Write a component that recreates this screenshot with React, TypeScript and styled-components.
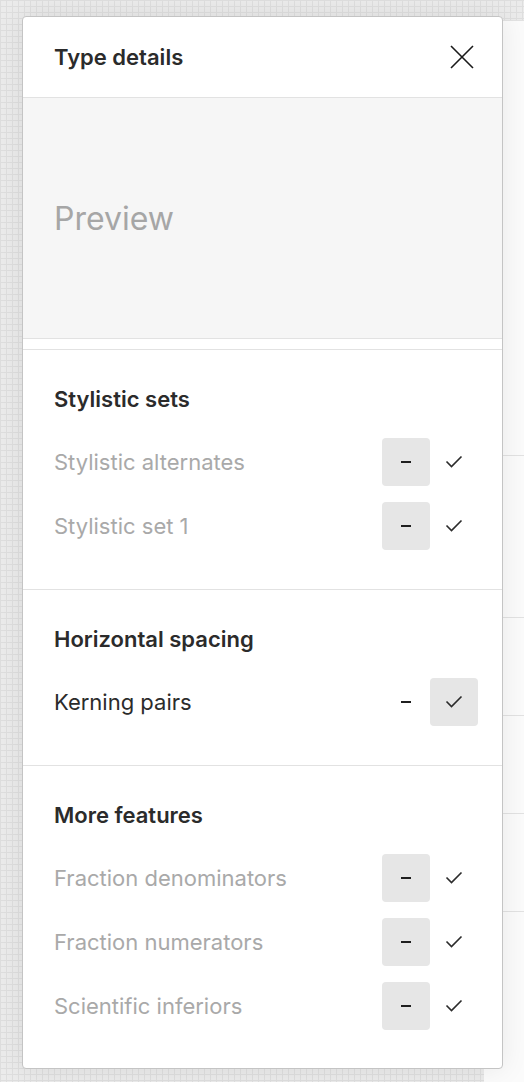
import React from 'react';
import styled, { createGlobalStyle } from 'styled-components';

const GlobalStyle = createGlobalStyle`
  html, body {
    margin: 0;
    padding: 0;
  }
  body {
    font-family: Inter, "Noto Sans", sans-serif;
    color: #2b2b2b;
  }
  * {
    box-sizing: border-box;
  }
`;

const Page = styled.div`
  position: relative;
  width: 524px;
  height: 1082px;
  overflow: hidden;
  display: flex;
  background-color: #ebebeb;
  background-image:
    linear-gradient(#dedede 1px, transparent 1px),
    linear-gradient(90deg, #dedede 1px, transparent 1px);
  background-size: 6px 6px;
`;

const Canvas = styled.div`
  flex: 1;
`;

const Sidebar = styled.div`
  width: 40px;
  margin-top: 20px;
  background: #fbfbfb;
  border-top: 1px solid #e2e2e2;
  display: flex;
  flex-direction: column;
`;

const SidebarRow = styled.div<{ $h: number }>`
  height: ${(p) => p.$h}px;
  flex-shrink: 0;
  border-bottom: 1px solid #e2e2e2;
`;

const Panel = styled.div`
  position: absolute;
  left: 22px;
  top: 16px;
  width: 481px;
  height: 1053px;
  background: #ffffff;
  border: 1px solid #c4c4c4;
  border-radius: 4px;
  box-shadow: 0 0 28px rgba(0, 0, 0, 0.08);
  display: flex;
  flex-direction: column;
  overflow: hidden;
`;

const Header = styled.div`
  height: 81px;
  flex-shrink: 0;
  padding: 0 24px 0 31px;
  border-bottom: 1px solid #e2e2e2;
  display: flex;
  align-items: center;
  justify-content: space-between;
`;

const Title = styled.h2`
  margin: 0;
  font-size: 22px;
  font-weight: 600;
  line-height: 26px;
  color: #2b2b2b;
`;

const CloseButton = styled.button`
  width: 32px;
  height: 32px;
  padding: 0;
  border: none;
  background: transparent;
  display: flex;
  align-items: center;
  justify-content: center;
  color: #1a1a1a;
`;

const Preview = styled.div`
  height: 241px;
  flex-shrink: 0;
  margin-bottom: 10px;
  padding: 0 31px;
  background: #f6f6f6;
  border-bottom: 1px solid #e2e2e2;
  display: flex;
  align-items: center;
  font-size: 32px;
  color: #a6a6a6;
`;

const Section = styled.div`
  padding: 36px 24px 39px 31px;
  border-top: 1px solid #e2e2e2;
  display: flex;
  flex-direction: column;
  gap: 16px;
`;

const SectionTitle = styled.h3`
  margin: 0 0 10px;
  font-size: 22px;
  font-weight: 600;
  line-height: 26px;
  color: #2b2b2b;
`;

const Row = styled.div`
  height: 48px;
  display: flex;
  align-items: center;
  justify-content: space-between;
`;

const Label = styled.span<{ $muted?: boolean }>`
  font-size: 22px;
  color: ${(p) => (p.$muted ? '#a9a9a9' : '#2b2b2b')};
`;

const Toggle = styled.div`
  display: flex;
`;

const Option = styled.div<{ $active?: boolean }>`
  width: 48px;
  height: 48px;
  border-radius: 4px;
  background: ${(p) => (p.$active ? '#e6e6e6' : 'transparent')};
  display: flex;
  align-items: center;
  justify-content: center;
  color: #1f1f1f;
`;

const Dash = () => (
  <svg width="12" height="12" viewBox="0 0 12 12">
    <rect x="1" y="5" width="10" height="2" fill="#1f1f1f" />
  </svg>
);

const Check = () => (
  <svg width="18" height="14" viewBox="0 0 18 14">
    <path d="M1.5 6.5 L6.5 11.5 L16.5 1.5" fill="none" stroke="#2b2b2b" strokeWidth="1.6" />
  </svg>
);

const Close = () => (
  <svg width="24" height="24" viewBox="0 0 24 24">
    <path d="M1 1 L23 23 M23 1 L1 23" fill="none" stroke="#1a1a1a" strokeWidth="1.6" />
  </svg>
);

interface Feature {
  name: string;
  on: boolean;
}

const sections: { title: string; features: Feature[] }[] = [
  {
    title: 'Stylistic sets',
    features: [
      { name: 'Stylistic alternates', on: false },
      { name: 'Stylistic set 1', on: false },
    ],
  },
  {
    title: 'Horizontal spacing',
    features: [{ name: 'Kerning pairs', on: true }],
  },
  {
    title: 'More features',
    features: [
      { name: 'Fraction denominators', on: false },
      { name: 'Fraction numerators', on: false },
      { name: 'Scientific inferiors', on: false },
    ],
  },
];

const App = () => {
  return (
    <>
      <GlobalStyle />
      <Page>
        <Canvas />
        <Sidebar>
          <SidebarRow $h={435} />
          <SidebarRow $h={162} />
          <SidebarRow $h={98} />
          <SidebarRow $h={98} />
          <SidebarRow $h={98} />
        </Sidebar>
        <Panel>
          <Header>
            <Title>Type details</Title>
            <CloseButton>
              <Close />
            </CloseButton>
          </Header>
          <Preview>Preview</Preview>
          {sections.map((s) => (
            <Section key={s.title}>
              <SectionTitle>{s.title}</SectionTitle>
              {s.features.map((f) => (
                <Row key={f.name}>
                  <Label $muted={!f.on}>{f.name}</Label>
                  <Toggle>
                    <Option $active={!f.on}>
                      <Dash />
                    </Option>
                    <Option $active={f.on}>
                      <Check />
                    </Option>
                  </Toggle>
                </Row>
              ))}
            </Section>
          ))}
        </Panel>
      </Page>
    </>
  );
};

export default App;
